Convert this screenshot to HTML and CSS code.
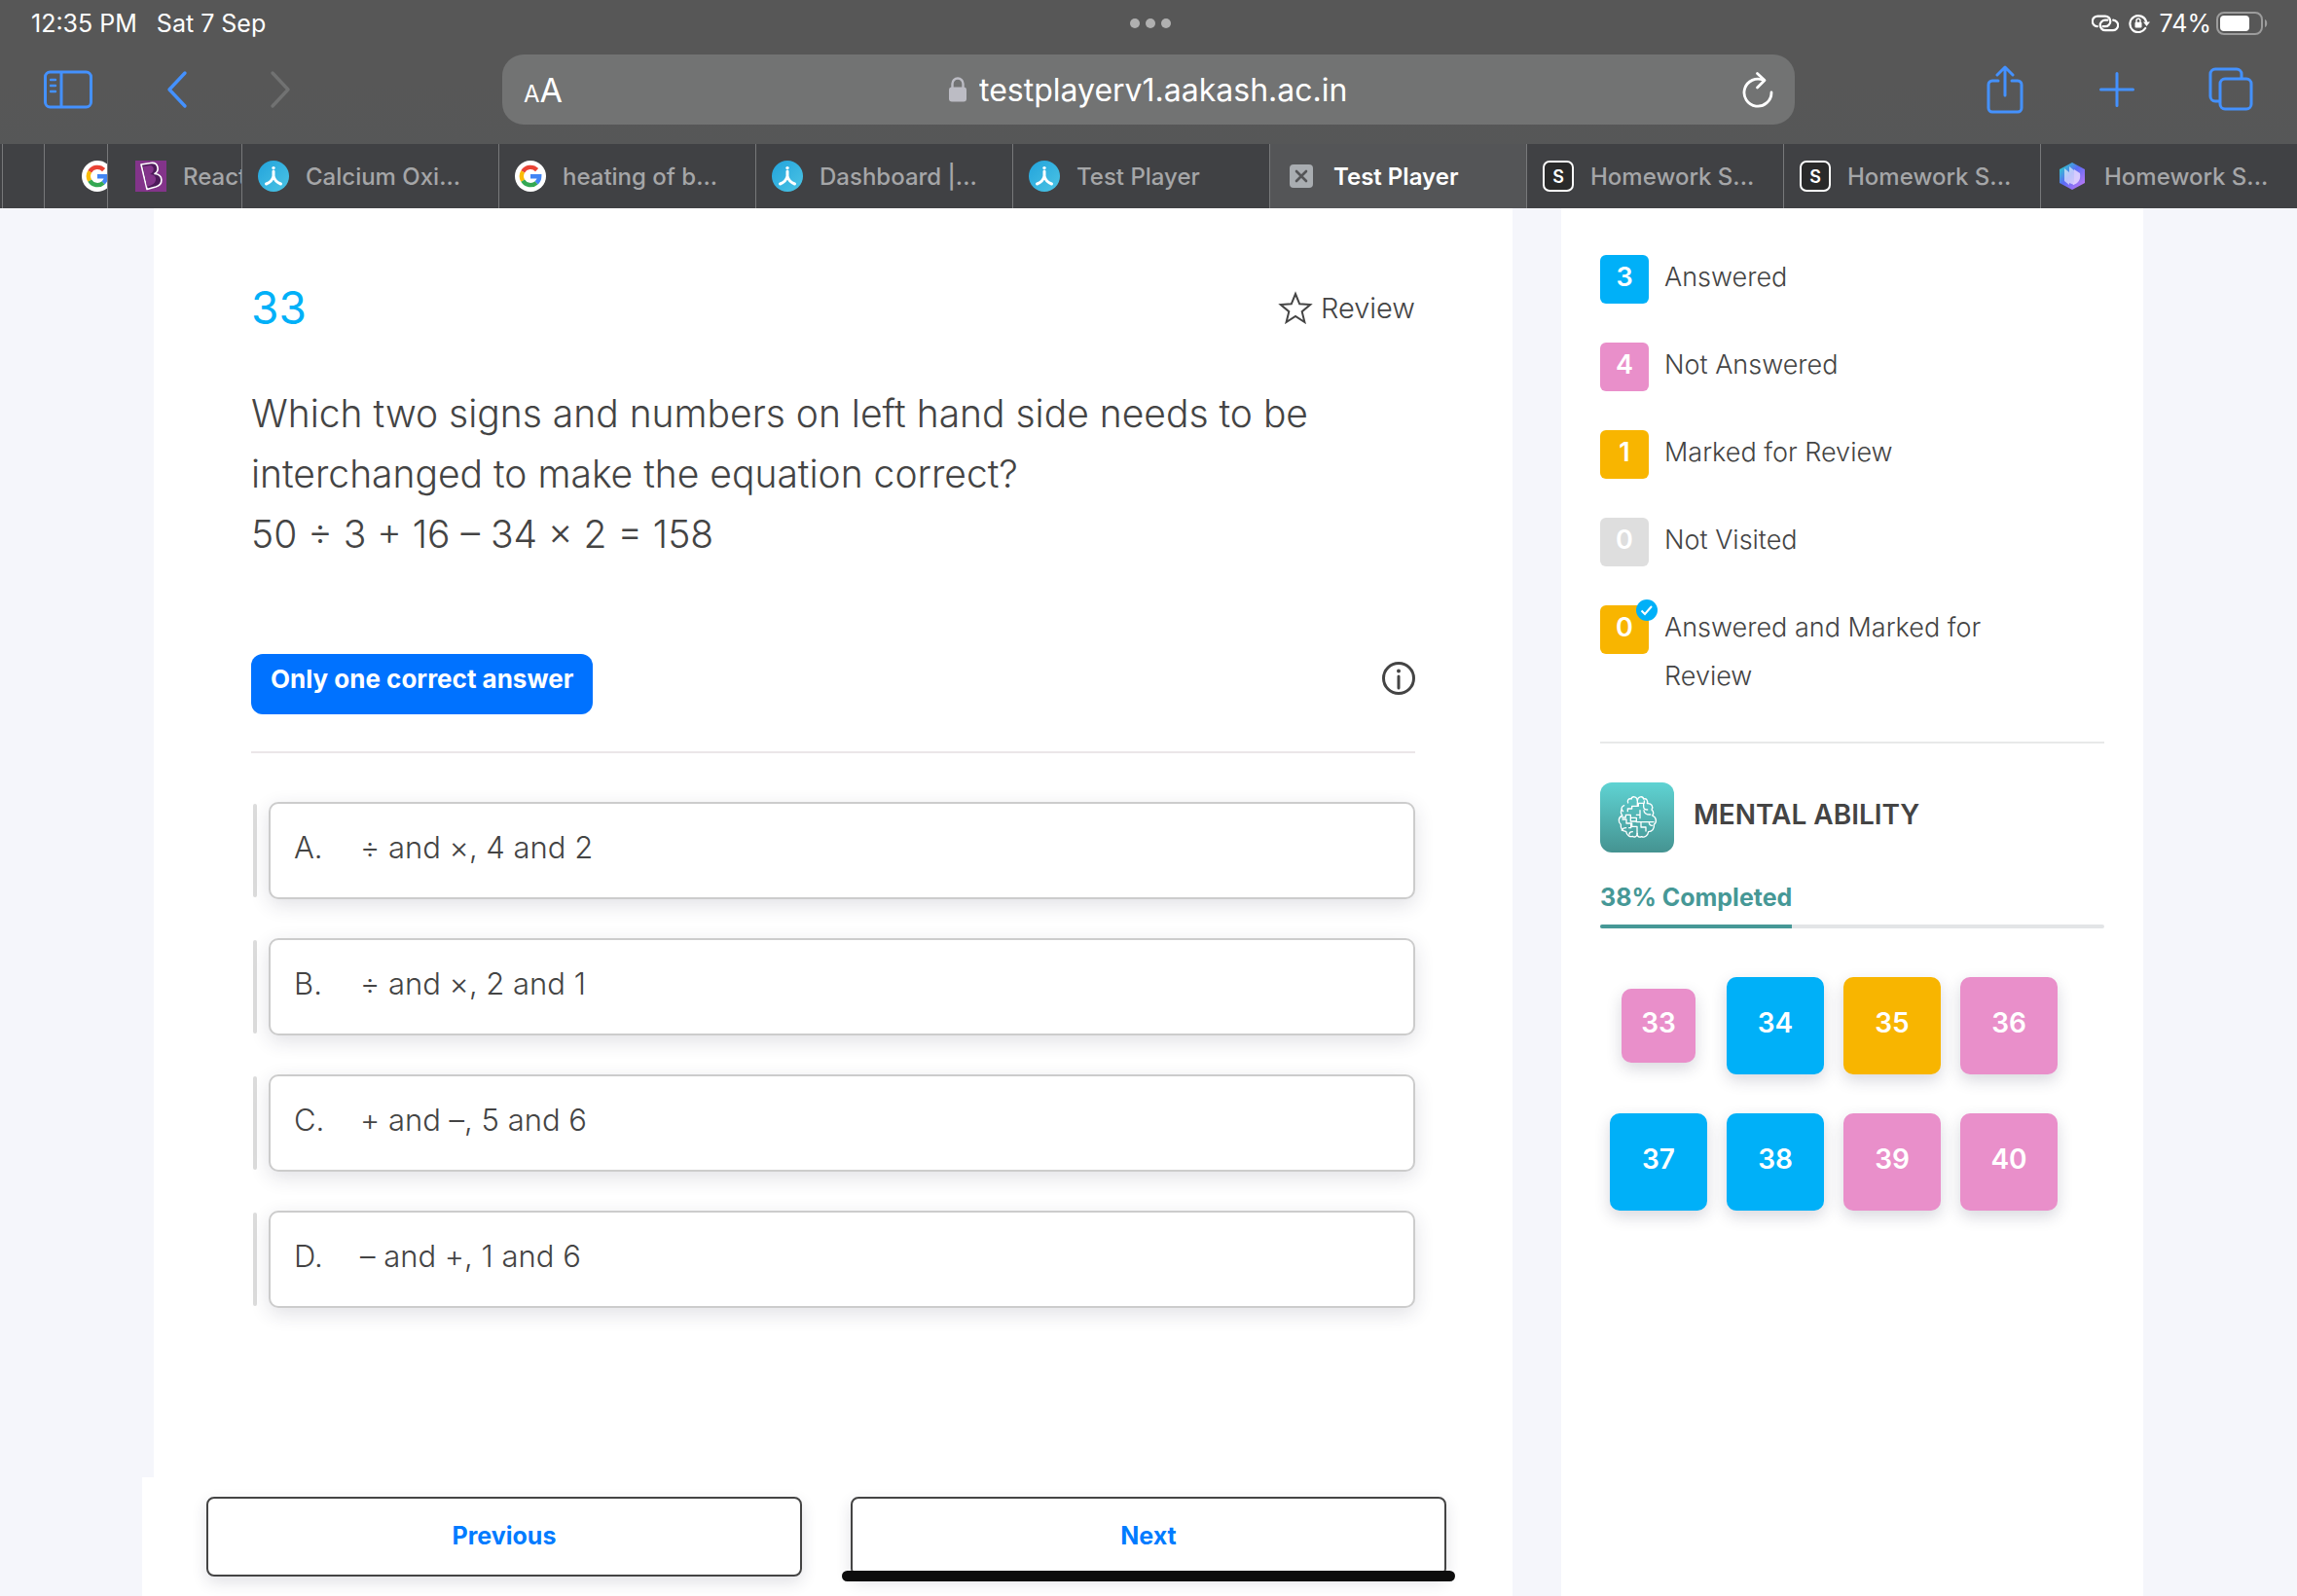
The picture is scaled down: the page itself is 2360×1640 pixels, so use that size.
FILE: index.html
```html
<!DOCTYPE html>
<html lang="en">
<head>
<meta charset="utf-8">
<meta name="viewport" content="width=device-width, initial-scale=1">
<title>Test Player</title>
<link rel="stylesheet" href="styles.css">
</head>
<body>
<svg class="defs" aria-hidden="true">
  <defs>
    <linearGradient id="sky" x1="0" y1="0" x2="1" y2="1"><stop offset="0" stop-color="#22a3dc"/><stop offset="1" stop-color="#4cc4e4"/></linearGradient>
    <linearGradient id="gem" x1="0" y1="0" x2="1" y2="1"><stop offset="0" stop-color="#22e3c2"/><stop offset=".45" stop-color="#5a6cf5"/><stop offset="1" stop-color="#d07bf5"/></linearGradient>
    <symbol id="google" viewBox="0 0 32 32"><circle cx="16" cy="16" r="16" fill="#fff"/><g fill="none" stroke-width="4.4"><path d="M8.2 11.3A9.2 9.2 0 0 1 22.6 9.6" stroke="#ea4335"/><path d="M8.2 20.7a9.2 9.2 0 0 1 0-9.4" stroke="#fbbc05"/><path d="M22.2 22.8A9.2 9.2 0 0 1 8.2 20.7" stroke="#34a853"/><path d="M16 16.2h9.2a9.2 9.2 0 0 1-3 6.6" stroke="#4285f4"/></g></symbol>
    <symbol id="aakash" viewBox="0 0 32 32"><circle cx="16" cy="16" r="16" fill="url(#sky)"/><circle cx="16" cy="7.6" r="1.7" fill="#fff"/><path d="M16 11v6.500M16 16c-1 4-3.500 6.500-7.500 8M16 16c1 4 3.500 6.500 7.500 8" fill="none" stroke="#fff" stroke-width="3" stroke-linecap="round"/></symbol>
  </defs>
</svg>

<header class="browser">
  <div class="status">
    <div class="status-side"><span>12:35 PM</span><span>Sat 7 Sep</span></div>
    <div class="dots"><i></i><i></i><i></i></div>
    <div class="status-side status-right">
      <svg width="28" height="18" viewBox="0 0 28 18" fill="none" stroke="#fff" stroke-width="2.200" stroke-linecap="round"><path d="M5.800 12.200A5.300 5.300 0 0 1 6.500 1.600h7.500a5.300 5.300 0 0 1 0 10.600h-2.500"/><path d="M22.200 5.600a5.300 5.300 0 0 1-.7 10.600h-7.500a5.300 5.300 0 0 1 0-10.600h2.500"/></svg>
      <svg width="22" height="20" viewBox="0 0 22 20" fill="none" stroke="#fff"><path d="M17.200 15A8.500 8.500 0 1 1 18 8" stroke-width="2.200" stroke-linecap="round"/><path d="M15 8.500h7l-3.500 4.500z" fill="#fff" stroke="none"/><rect x="6.500" y="8.800" width="7" height="5.600" rx="1" fill="#fff" stroke="none"/><path d="M8 9V7.200a2 2 0 0 1 4 0V9" stroke-width="1.400"/></svg>
      <div class="battery">
        <span>74%</span>
        <svg width="54" height="24" viewBox="0 0 54 24"><rect x="1" y="1" width="46" height="22" rx="7" fill="none" stroke="#9c9c9c" stroke-width="2"/><rect x="4" y="4" width="30" height="16" rx="4" fill="#fff"/><path d="M50 8c3 1 3 7 0 8z" fill="#9c9c9c"/></svg>
      </div>
    </div>
  </div>

  <div class="toolbar">
    <div class="tools">
      <button type="button" aria-label="Show sidebar"><svg width="52" height="40" viewBox="0 0 52 40" fill="none" stroke="currentColor" stroke-width="3"><rect x="2.500" y="2" width="47" height="36" rx="5"/><path d="M19 2v36"/><path d="M8 10h5M8 16h5M8 22h5" stroke-width="2.400" stroke-linecap="round"/></svg></button>
      <button type="button" aria-label="Back"><svg width="52" height="40" viewBox="0 0 52 40" fill="none" stroke="currentColor" stroke-width="3.400" stroke-linecap="round" stroke-linejoin="round"><path d="M38 3 22 20l16 17"/></svg></button>
      <button type="button" aria-label="Forward" class="off"><svg width="52" height="40" viewBox="0 0 52 40" fill="none" stroke="currentColor" stroke-width="3.400" stroke-linecap="round" stroke-linejoin="round"><path d="m20 3 16 17-16 17"/></svg></button>
    </div>
    <div class="address">
      <button type="button" class="reader" aria-label="Page settings"><small>A</small>A</button>
      <div class="location">
        <svg width="20" height="28" viewBox="0 0 20 28"><rect x="1" y="11.500" width="18" height="15" rx="3" fill="#bcbcc4"/><path d="M4.500 12V8a5.500 5.500 0 0 1 11 0v4" fill="none" stroke="#bcbcc4" stroke-width="2.400"/></svg>
        <input type="text" aria-label="Address" value="testplayerv1.aakash.ac.in">
      </div>
      <button type="button" class="reload" aria-label="Reload"><svg width="32" height="38" viewBox="0 0 32 38" fill="none" stroke="#fff" stroke-width="2.800" stroke-linecap="round" stroke-linejoin="round"><path d="M30 22A14 14 0 1 1 22 9.500"/><path d="m15.500 2.500 7.500 7-7.500 7.500"/></svg></button>
    </div>
    <div class="tools tools-right">
      <button type="button" aria-label="Share"><svg width="52" height="50" viewBox="0 0 52 50" fill="none" stroke="currentColor" stroke-width="3" stroke-linecap="round" stroke-linejoin="round"><path d="M19 16h-6a4 4 0 0 0-4 4v24a4 4 0 0 0 4 4h26a4 4 0 0 0 4-4V20a4 4 0 0 0-4-4h-6"/><path d="M26 31V3M18 10l8-8 8 8"/></svg></button>
      <button type="button" aria-label="New tab"><svg width="52" height="40" viewBox="0 0 52 40" fill="none" stroke="currentColor" stroke-width="3" stroke-linecap="round"><path d="M25 3.500v33M8.500 20h33"/></svg></button>
      <button type="button" aria-label="Show tabs"><svg width="52" height="46" viewBox="0 0 52 46" fill="none" stroke="currentColor" stroke-width="3"><rect x="15" y="12" width="32" height="31" rx="5"/><path d="M15 35h-5a5 5 0 0 1-5-5V7a5 5 0 0 1 5-5h22a5 5 0 0 1 5 5v5"/></svg></button>
    </div>
  </div>

  <nav class="tabs" aria-label="Open tabs">
    <a href="#" class="tab tab-edge" aria-label="Tab"></a>
    <a href="#" class="tab tab-peek" aria-label="Tab"></a>
    <a href="#" class="tab tab-google" aria-label="Google"><svg width="32" height="32"><use href="#google"/></svg></a>
    <a href="#" class="tab tab-react"><svg width="32" height="32" viewBox="0 0 32 32"><path fill="#83348a" d="M0 0h32v32H0z"/><path d="m6 4 10-1.500c8-1 9 8 4 11 9 1 9 11 1 13.500L12 29.500z" fill="#4d1a5a" stroke="#fff" stroke-width="1.600" stroke-linejoin="round"/><path d="m8 6 7-1c5 0 5 7 0 9 8 0 8 9 1 11.500l-4 1.500z" fill="#83348a"/></svg><span>React</span></a>
    <a href="#" class="tab"><svg width="32" height="32"><use href="#aakash"/></svg><span>Calcium Oxi...</span></a>
    <a href="#" class="tab"><svg width="32" height="32"><use href="#google"/></svg><span>heating of b...</span></a>
    <a href="#" class="tab"><svg width="32" height="32"><use href="#aakash"/></svg><span>Dashboard |...</span></a>
    <a href="#" class="tab"><svg width="32" height="32"><use href="#aakash"/></svg><span>Test Player</span></a>
    <a href="#" class="tab active" aria-current="page"><svg width="32" height="32" viewBox="0 0 32 32"><rect x="4" y="4" width="24" height="24" rx="4" fill="#a9adb1"/><path d="m11 11 10 10M21 11 11 21" stroke="#545557" stroke-width="2.600" stroke-linecap="round"/></svg><span>Test Player</span></a>
    <a href="#" class="tab"><b class="s-icon">S</b><span>Homework S...</span></a>
    <a href="#" class="tab"><b class="s-icon">S</b><span>Homework S...</span></a>
    <a href="#" class="tab"><svg width="32" height="32" viewBox="0 0 32 32"><path d="m16 2 13 7v14l-13 7-13-7V9z" fill="url(#gem)"/><path d="m8 8 5 4v13l-5-4zM13 6l5 4v15l-5-2z" fill="#fff" opacity=".6"/><path d="m18 9 6 4c1 6-1 10-7 12l1-3z" fill="#e9dcff" opacity=".85"/></svg><span>Homework S...</span></a>
  </nav>
</header>

<div class="page">
  <main class="panel question">
    <div class="content">
      <div class="head">
        <h1>33</h1>
        <button type="button" class="review"><svg width="36" height="34" viewBox="0 0 36 34" fill="none" stroke="#444" stroke-width="2"><path d="m18 3 4.200 10.300 11 .8-8.500 7.100 2.700 10.800L18 26l-9.400 6 2.700-10.800-8.500-7.100 11-.8z"/></svg>Review</button>
      </div>
      <p class="prompt">Which two signs and numbers on left hand side needs to be interchanged to make the equation correct?<br>50 ÷ 3 + 16 – 34 × 2 = 158</p>
      <div class="kind">
        <span class="kind-label">Only one correct answer</span>
        <button type="button" class="info" aria-label="Information"><svg width="34" height="34" viewBox="0 0 34 34" fill="none" stroke="#444"><circle cx="17" cy="17" r="15.500" stroke-width="3"/><circle cx="17" cy="9.500" r="2" fill="#444" stroke="none"/><path d="M17 15v12" stroke-width="3" stroke-linecap="round"/></svg></button>
      </div>
      <div class="options" role="radiogroup" aria-label="Answers">
        <label class="option"><input type="radio" name="answer"><span class="option-box"><span class="letter">A.</span><span>÷ and ×, 4 and 2</span></span></label>
        <label class="option"><input type="radio" name="answer"><span class="option-box"><span class="letter">B.</span><span>÷ and ×, 2 and 1</span></span></label>
        <label class="option"><input type="radio" name="answer"><span class="option-box"><span class="letter">C.</span><span>+ and –, 5 and 6</span></span></label>
        <label class="option"><input type="radio" name="answer"><span class="option-box"><span class="letter">D.</span><span>– and +, 1 and 6</span></span></label>
      </div>
    </div>
    <footer class="pager">
      <button type="button">Previous</button>
      <button type="button">Next</button>
    </footer>
  </main>

  <aside class="panel summary">
    <ul class="legend">
      <li><span class="count blue">3</span><span>Answered</span></li>
      <li><span class="count pink">4</span><span>Not Answered</span></li>
      <li><span class="count amber">1</span><span>Marked for Review</span></li>
      <li><span class="count grey">0</span><span>Not Visited</span></li>
      <li><span class="count amber">0<svg class="tick" width="22" height="22" viewBox="0 0 22 22"><circle cx="11" cy="11" r="11" fill="#00b0f8"/><path d="m5.500 11.500 3.500 3.500 7-8" fill="none" stroke="#fff" stroke-width="2"/></svg></span><span>Answered and Marked for Review</span></li>
    </ul>
    <div class="subject">
      <span class="subject-icon">
        <svg width="76" height="72" viewBox="24 24 228 216" fill="none" stroke="#fff" stroke-width="4" stroke-linecap="round" stroke-linejoin="round">
          <path d="M139 96V80c-1-14-17-15-19-5-8-3-13 4-10 12"/>
          <path d="M139 80c1-14 17-15 19-5 9-3 14 5 11 14 13-2 20 10 14 19 7 6 6 14 2 18 14 6 14 22 5 28 2 13-6 22-17 22-2 13-13 19-21 15-8 4-14-1-14-9v-20"/>
          <path d="M98 95c-9 4-11 12-3 18M90 107c-3 9-2 15 3 19-14 5-14 21-5 28-2 13 6 21 16 21 2 13 13 18 20 15 8 5 15-1 15-9"/>
          <path d="M122 97h20v-9h18v-7M122 97v8h-13v8M158 88v10c0 6 5 10 12 10M147 110v14h-11M147 124v10M159 110c0 8 8 14 20 13M103 124v8h-11M103 124h15v9h18v13h53M118 134v10h18M105 150v-12H93M105 150h14v14h-6M122 150v10h16M150 146v16h14M176 146c-3 6 2 11 9 11M104 164c-7 0-11 3-13 8M165 162v12M124 176c-7 0-10 4-10 8"/>
        </svg>
      </span>
      <h2>MENTAL ABILITY</h2>
    </div>
    <label class="progress-label" for="done">38% Completed</label>
    <progress id="done" max="100" value="38"></progress>
    <div class="tiles">
      <button type="button" class="tile pink current">33</button>
      <button type="button" class="tile blue">34</button>
      <button type="button" class="tile amber">35</button>
      <button type="button" class="tile pink">36</button>
      <button type="button" class="tile blue">37</button>
      <button type="button" class="tile blue">38</button>
      <button type="button" class="tile pink">39</button>
      <button type="button" class="tile pink">40</button>
    </div>
  </aside>
</div>
<div class="home-indicator"></div>
</body>
</html>
```
FILE: styles.css
```css
* { box-sizing: border-box; }

body {
  margin: 0;
  min-height: 100vh;
  display: flex;
  flex-direction: column;
  background: #f5f6fb;
  color: #444;
  font-family: Inter, "Liberation Sans", sans-serif;
}

button, input {
  margin: 0;
  padding: 0;
  border: 0;
  background: none;
  color: inherit;
  font: inherit;
}

h1, h2, p, ul { margin: 0; padding: 0; }
svg { display: block; flex: none; }
.defs { position: absolute; width: 0; height: 0; }

/* Browser chrome */
.browser { background: linear-gradient(#575757 40%, #555758); color: #fff; }

.status {
  display: grid;
  grid-template-columns: 1fr auto 1fr;
  align-items: center;
  height: 48px;
  padding: 0 29px 0 32px;
  font-size: 25px;
  font-weight: 400;
}
.status-side { display: flex; align-items: center; gap: 20px; }
.status-right { justify-content: flex-end; gap: 10px; }
.battery { display: flex; align-items: center; gap: 5px; }
.dots { display: flex; gap: 6px; }
.dots i { width: 10px; height: 10px; border-radius: 50%; background: #b0b0b0; }

.toolbar {
  display: grid;
  grid-template-columns: 1fr minmax(0, 1328px) 1fr;
  align-items: center;
  padding: 8px 0 20px;
}
.tools { display: flex; align-items: center; gap: 56px; padding-left: 44px; color: #4491fe; }
.tools-right { justify-content: flex-end; gap: 64px; padding: 0 42px 0 0; }
.tools .off { color: #717272; }

.address {
  display: grid;
  grid-template-columns: 1fr auto 1fr;
  align-items: center;
  height: 72px;
  padding: 0 22px;
  border-radius: 22px;
  background: #727373;
}
.reader { justify-self: start; font-size: 34px; }
.reader small { font-size: 24px; }
.location { display: flex; align-items: center; gap: 12px; }
.location input { width: 380px; font-size: 32px; }
.reload { justify-self: end; }

.tabs { display: flex; height: 66px; background: #404144; }
.tab {
  flex: 1 1 0;
  display: flex;
  align-items: center;
  gap: 17px;
  min-width: 0;
  padding-left: 16px;
  overflow: hidden;
  border-right: 1px solid #77787a;
  color: #a5a6a8;
  font-size: 24px;
  font-weight: 500;
  white-space: nowrap;
  text-decoration: none;
}
.tab:last-child { border-right: 0; }
.tab-edge { flex: 0 0 3px; padding: 0; }
.tab-peek { flex: 0 0 43px; }
.tab-google { flex: 0 0 65px; padding-left: 38px; }
.tab-react { flex: 0 0 138px; padding-left: 28px; }
.active { background: #545557; color: #fff; font-weight: 600; }
.s-icon {
  display: grid;
  place-items: center;
  width: 32px;
  height: 32px;
  border: 2px solid #fff;
  border-radius: 7px;
  background: #2a2a2a;
  color: #fff;
  font-size: 18px;
  font-weight: 600;
}

/* Page */
.page {
  flex: 1;
  display: grid;
  grid-template-columns: minmax(0, 1396fr) minmax(0, 598fr);
  gap: 50px;
  padding: 0 158px;
}
.panel { background: #fff; }
.question { display: flex; flex-direction: column; }
.content { padding: 78px 100px 40px; }

.head { display: flex; align-items: center; justify-content: space-between; height: 48px; }
.head h1 { color: #00b0f8; font-size: 46px; font-weight: 400; }
.review { display: flex; align-items: center; gap: 8px; font-size: 29px; font-weight: 300; }

.prompt { margin-top: 54px; font-size: 39px; font-weight: 300; line-height: 62px; }

.kind {
  display: flex;
  align-items: center;
  justify-content: space-between;
  margin-top: 92px;
  padding-bottom: 38px;
  border-bottom: 2px solid #ebe6e8;
}
.kind-label {
  height: 62px;
  padding: 0 20px;
  border-radius: 12px;
  background: #0072ff;
  color: #fff;
  font-size: 26px;
  font-weight: 700;
  line-height: 52px;
}
.info { padding-bottom: 12px; }

.options { display: grid; gap: 40px; margin-top: 50px; }
.option { display: flex; align-items: center; gap: 12px; }
.option input {
  appearance: none;
  flex: none;
  width: 4px;
  height: 96px;
  margin-left: 2px;
  border-radius: 2px;
  background: #dcdcdc;
}
.option-box {
  flex: 1;
  display: flex;
  height: 100px;
  padding: 0 24px;
  border: 2px solid #ccc;
  border-radius: 10px;
  background: #fff;
  box-shadow: 0 6px 20px rgba(40, 40, 70, .14);
  font-size: 31px;
  font-weight: 300;
  line-height: 90px;
}
.letter { width: 68px; }

.pager {
  display: grid;
  grid-template-columns: 1fr 1fr;
  gap: 50px;
  margin: auto 0 0 -12px;
  padding: 20px 68px 20px 66px;
  background: #fff;
}
.pager button {
  height: 82px;
  padding-bottom: 2px;
  border: 2px solid #444;
  border-radius: 8px;
  box-shadow: 0 6px 16px rgba(40, 40, 70, .14);
  color: #007bff;
  font-size: 25px;
  font-weight: 700;
}

.summary { padding: 48px 40px; }
.legend { display: grid; gap: 40px; padding-bottom: 42px; border-bottom: 2px solid #e8e9e9; list-style: none; }
.legend li { display: flex; gap: 16px; padding-right: 90px; font-size: 27px; font-weight: 300; line-height: 46px; }
.legend li > span:last-child { line-height: 50px; margin-top: -2px; }
.count {
  position: relative;
  flex: none;
  width: 50px;
  height: 50px;
  border-radius: 6px;
  color: #fff;
  font-size: 27px;
  font-weight: 600;
  text-align: center;
}
.tick { position: absolute; top: -6px; right: -9px; }

.blue { background: #00b0f8; }
.pink { background: #e98fca; }
.amber { background: #f8b500; }
.grey { background: #dedede; }

.subject { display: flex; gap: 20px; margin-top: 40px; }
.subject-icon { border-radius: 12px; background: linear-gradient(#5fd3d3, #459391); }
.subject h2 { font-size: 28px; font-weight: 600; line-height: 66px; }

.progress-label {
  display: block;
  margin-top: 28px;
  color: #469896;
  font-size: 25px;
  font-weight: 700;
  line-height: 36px;
}
progress {
  appearance: none;
  display: block;
  width: 100%;
  height: 4px;
  margin-top: 10px;
  border: 0;
}
progress::-webkit-progress-bar { border-radius: 2px; background: #e3e5e7; }
progress::-webkit-progress-value { border-radius: 2px 0 0 2px; background: #469896; }

.tiles {
  display: grid;
  grid-template-columns: repeat(4, 100px);
  grid-auto-rows: 100px;
  place-items: center;
  gap: 40px 20px;
  margin: 50px 0 0 10px;
}
.tile {
  width: 100px;
  height: 100px;
  padding-bottom: 6px;
  border-radius: 10px;
  box-shadow: 0 6px 16px rgba(40, 40, 70, .18);
  color: #fff;
  font-size: 28px;
  font-weight: 600;
}
.current { width: 76px; height: 76px; }

.home-indicator {
  position: fixed;
  right: 865px;
  bottom: 15px;
  width: 630px;
  height: 11px;
  border-radius: 6px;
  background: #0d0d0d;
}
```
